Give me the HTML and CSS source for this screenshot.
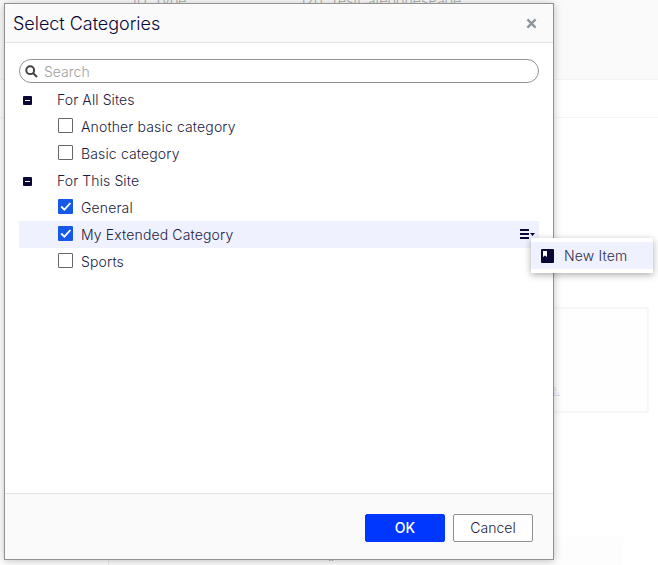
FILE: index.html
```
<!DOCTYPE html>
<html lang="en">
<head>
<meta charset="utf-8">
<title>Select Categories</title>
<link rel="stylesheet" href="styles.css">
</head>
<body>
<div class="backdrop">
  <div class="properties"><span class="prop-name">ID, Type</span><span class="prop-value">120, TestCategoriesPage</span></div>
  <div class="tabs"></div>
  <div class="content"><div class="area"><span class="link">here.</span></div></div>
  <div class="bottom"><span class="quote">"</span></div>
</div>
<section class="dialog">
  <header class="header">
    <h1 class="title">Select Categories</h1>
    <svg class="close" viewBox="0 0 10 10"><path d="M1.3 1.3l7.4 7.4M8.7 1.3L1.3 8.7"/></svg>
  </header>
  <main class="body">
    <div class="search">
      <svg class="magnifier" viewBox="0 0 13 13"><circle cx="5.2" cy="5.2" r="3.9"/><path d="M8.2 8.2l3.8 3.8"/></svg>
      <span>Search</span>
    </div>
    <div class="tree">
      <div class="row group"><i class="toggle"></i><span>For All Sites</span></div>
      <div class="row"><i class="check"></i><span>Another basic category</span></div>
      <div class="row"><i class="check"></i><span>Basic category</span></div>
      <div class="row group"><i class="toggle"></i><span>For This Site</span></div>
      <div class="row"><i class="check checked"><svg viewBox="0 0 15 15"><path d="M3.2 7.5l3.2 3.2 6-6.7"/></svg></i><span>General</span></div>
      <div class="row selected"><i class="check checked"><svg viewBox="0 0 15 15"><path d="M3.2 7.5l3.2 3.2 6-6.7"/></svg></i><span>My Extended Category</span>
        <svg class="menu-icon" viewBox="0 0 15 10"><path d="M0 0h9v2H0zM0 4h9v2H0zM0 8h9v2H0zM10 4h5l-2.5 3z"/></svg>
      </div>
      <div class="row"><i class="check"></i><span>Sports</span></div>
    </div>
  </main>
  <footer class="footer">
    <button class="button primary">OK</button>
    <button class="button">Cancel</button>
  </footer>
</section>
<div class="menu">
  <div class="menu-item">
    <svg class="item-icon" viewBox="0 0 13 14"><rect width="13" height="14" rx="1" fill="#080736"/><path d="M2 2h4v6L4 6.5 2 8z" fill="#fff"/></svg>
    <span>New Item</span>
  </div>
</div>
</body>
</html>
```
FILE: styles.css
```
* { box-sizing: border-box; }

body {
  margin: 0;
  width: 658px;
  height: 565px;
  overflow: hidden;
  position: relative;
  background: #fff;
  color: #1c1b3c;
  font: 300 14px/27px Inter, "Liberation Sans", sans-serif;
}

.backdrop {
  height: 565px;
  display: flex;
  flex-direction: column;
}

.properties {
  height: 80px;
  padding-left: 133px;
  display: flex;
  background: #fafafa;
  border-bottom: 1px solid #f3f3f3;
  color: #aaa;
  line-height: 16px;
}

.prop-name,
.prop-value { margin-top: -7px; }
.prop-name { width: 167px; }

.tabs {
  height: 38px;
  border-bottom: 1px solid #f5f5f5;
}

.content {
  flex: 1;
  padding: 189px 9px 0 108px;
}

.area {
  height: 106px;
  border: 2px solid #f7f7f7;
  background: #fefefe;
  padding: 66px 87px 0 0;
  text-align: right;
}

.link {
  color: #d8d8f4;
  font-size: 12px;
  text-decoration: underline;
}

.bottom {
  height: 28px;
  margin-left: 108px;
  margin-right: 35px;
  background: #fdfdfd;
  border-left: 1px solid #eee;
}

.quote {
  display: block;
  margin: 20px 0 0 218px;
  color: #888;
  line-height: 14px;
  font-size: 18px;
  letter-spacing: 1px;
}

.dialog {
  position: absolute;
  left: 4px;
  top: 3px;
  width: 550px;
  height: 557px;
  display: flex;
  flex-direction: column;
  background: #fff;
  border: 1px solid #929292;
  box-shadow: 0 1px 8px rgba(0, 0, 0, .25);
}

.header {
  height: 39px;
  padding: 0 16px 0 8px;
  display: flex;
  align-items: center;
  justify-content: space-between;
  background: #fafafa;
  border-bottom: 1px solid #e2e2e2;
}

.title {
  margin: 0;
  padding-top: 2px;
  color: #080736;
  font-size: 18px;
  font-weight: 300;
  line-height: 24px;
  letter-spacing: -.03px;
}

.close {
  width: 11px;
  height: 11px;
  margin-top: 1px;
  fill: none;
  stroke: #8c949a;
  stroke-width: 2.1;
}

.body {
  flex: 1;
  padding: 16px 14px 0;
}

.search {
  height: 24px;
  padding: 1px 5px 0;
  display: flex;
  align-items: center;
  gap: 6px;
  border: 1px solid #929292;
  border-radius: 12px;
  color: #a0a0a0;
}

.magnifier {
  width: 13px;
  height: 13px;
  fill: none;
  stroke: #444;
  stroke-width: 2;
}

.tree { padding-top: 3px; }

.row {
  height: 27px;
  padding: 0 4px 0 39px;
  display: flex;
  align-items: center;
  gap: 8px;
  letter-spacing: .14px;
}

.group {
  padding-left: 4px;
  gap: 25px;
  letter-spacing: .1px;
}

.group span { padding-bottom: 1px; }
.selected { background: #f0f1ff; }

.toggle {
  width: 9px;
  height: 9px;
  display: grid;
  place-items: center;
  background: #080736;
  border-radius: 1px;
  margin-top: 2px;
}

.toggle::after {
  content: "";
  width: 5px;
  height: 1px;
  background: #fff;
}

.check {
  width: 15px;
  height: 15px;
  margin-bottom: 2px;
  border: 1px solid #666;
  border-radius: 1px;
  background: #fff;
}

.checked {
  border: 0;
  background: #1659e8;
}

.checked svg {
  display: block;
  fill: none;
  stroke: #fff;
  stroke-width: 1.8;
}

.menu-icon {
  width: 15px;
  height: 10px;
  margin-left: auto;
  margin-bottom: 2px;
  fill: #080736;
}

.footer {
  height: 66px;
  padding: 20px;
  display: flex;
  justify-content: flex-end;
  gap: 8px;
  background: #fafafa;
  border-top: 1px solid #e2e2e2;
}

.button {
  width: 80px;
  height: 28px;
  padding: 0;
  border: 1px solid #929292;
  border-radius: 2px;
  background: #fff;
  color: #1c1b3c;
  font: 300 14px/24px Inter, sans-serif;
}

.primary {
  border-color: #0037ff;
  background: #0037ff;
  color: #fff;
  font-weight: 450;
}

.menu {
  position: absolute;
  left: 531px;
  top: 238px;
  width: 122px;
  height: 35px;
  padding: 4px 0;
  background: #fff;
  box-shadow: 0 2px 7px rgba(0, 0, 0, .32);
}

.menu-item {
  height: 27px;
  padding-left: 10px;
  display: flex;
  align-items: center;
  gap: 10px;
  background: #f0f1ff;
  color: #2c2b4c;
  font-weight: 300;
  letter-spacing: .15px;
}

.item-icon {
  width: 13px;
  height: 14px;
}
```
